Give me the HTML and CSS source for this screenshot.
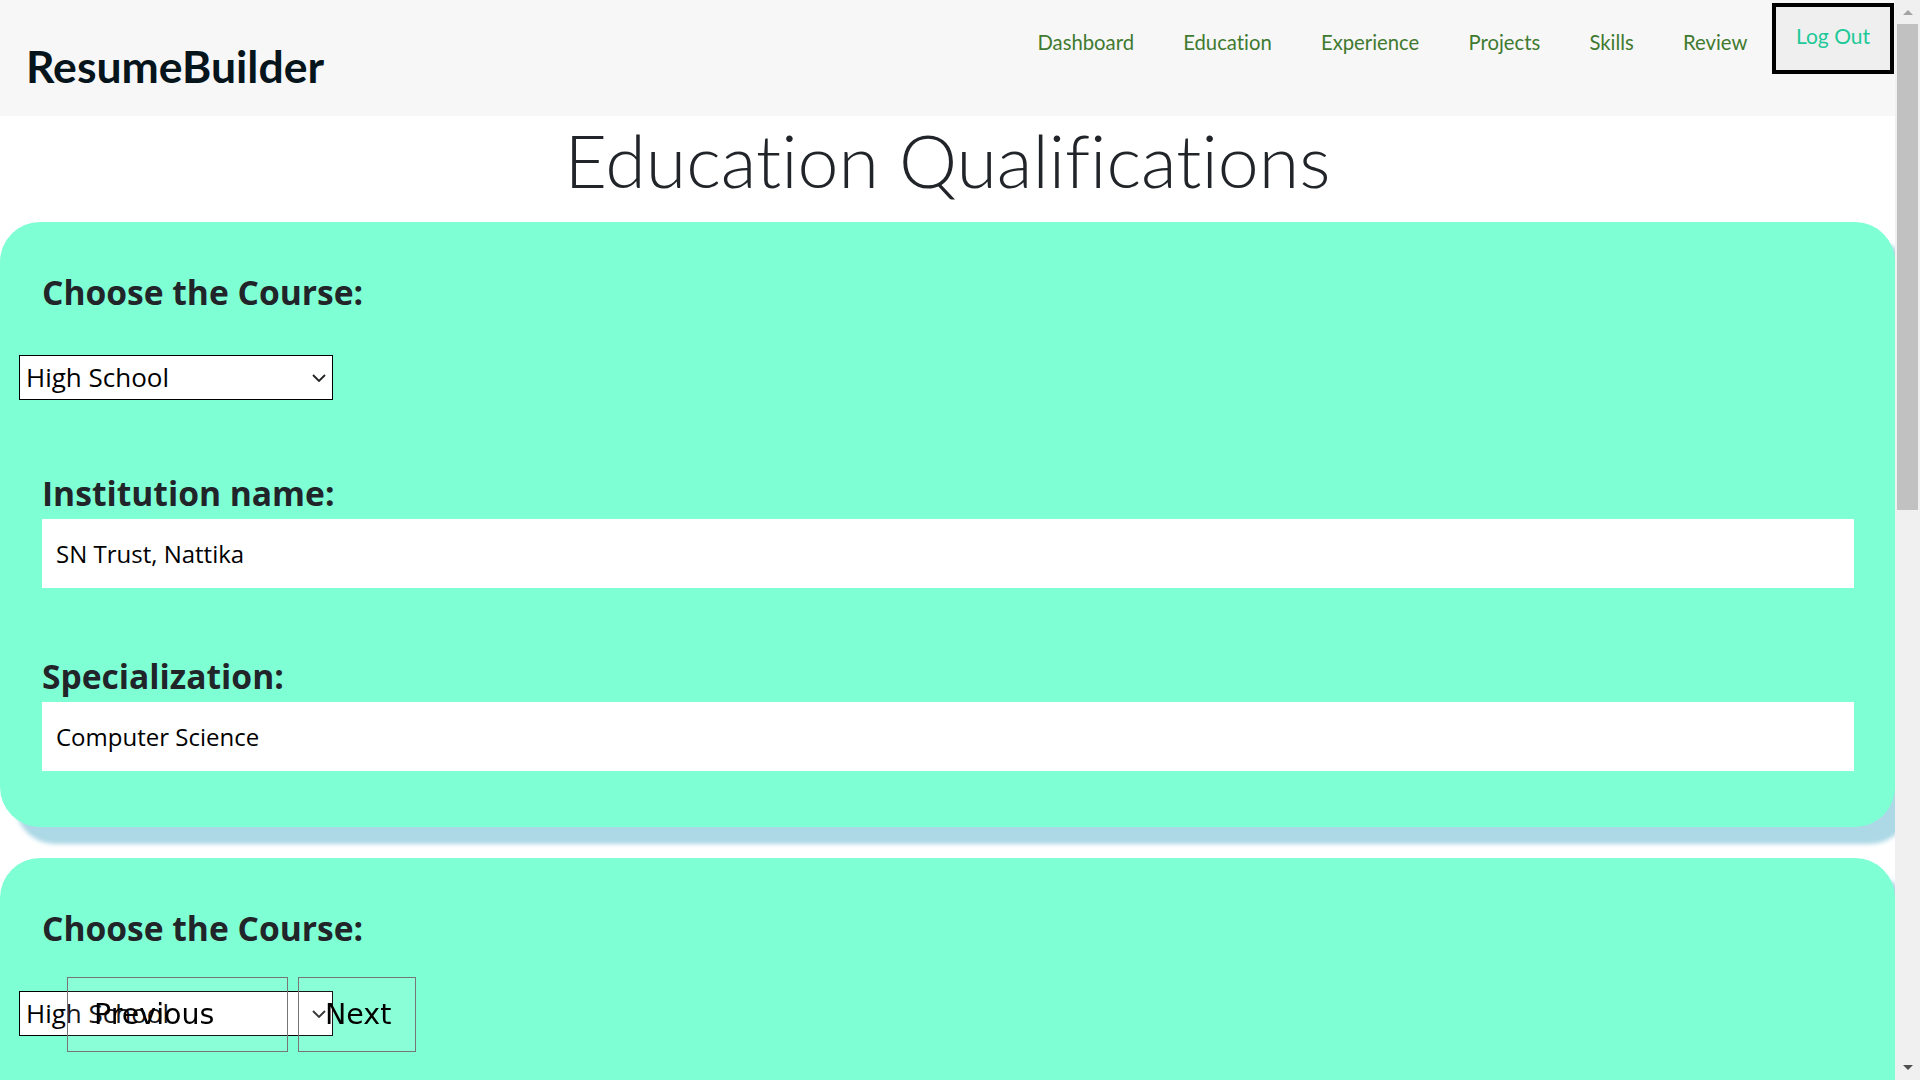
FILE: index.html
```html
<!DOCTYPE html>
<html lang="en">
<head>
<meta charset="utf-8">
<title>ResumeBuilder - Education</title>
<link rel="stylesheet" href="styles.css">
</head>
<body>
<div class="page">
  <header class="topbar">
    <div class="logo">ResumeBuilder</div>
    <nav class="nav">
      <a class="nav-link" href="#">Dashboard</a>
      <a class="nav-link" href="#">Education</a>
      <a class="nav-link" href="#">Experience</a>
      <a class="nav-link" href="#">Projects</a>
      <a class="nav-link" href="#">Skills</a>
      <a class="nav-link" href="#">Review</a>
      <button class="logout">Log Out</button>
    </nav>
  </header>

  <h1 class="title">Education Qualifications</h1>

  <section class="card">
    <h3 class="label first">Choose the Course:</h3>
    <div class="select-wrap">
      <select class="course"><option>High School</option></select>
      <svg class="chev" width="14" height="8" viewBox="0 0 14 8"><path d="M1 1 L7 7 L13 1" fill="none" stroke="#222" stroke-width="1.8"/></svg>
    </div>
    <h3 class="label">Institution name:</h3>
    <input class="field" type="text" value="SN Trust, Nattika">
    <h3 class="label">Specialization:</h3>
    <input class="field" type="text" value="Computer Science">
  </section>

  <section class="card second">
    <h3 class="label first">Choose the Course:</h3>
    <div class="select-wrap">
      <select class="course"><option>High School</option></select>
      <svg class="chev" width="14" height="8" viewBox="0 0 14 8"><path d="M1 1 L7 7 L13 1" fill="none" stroke="#222" stroke-width="1.8"/></svg>
    </div>
  </section>

  <div class="pager">
    <button class="pbtn prev">Previous</button>
    <button class="pbtn next">Next</button>
  </div>
</div>
<div class="scrollbar">
  <div class="arrow up"></div>
  <div class="thumb"></div>
  <div class="track-rest"></div>
  <div class="arrow down"></div>
</div>
</body>
</html>
```
FILE: styles.css
```css
* { box-sizing: border-box; }
html, body { margin: 0; padding: 0; }
body {
  display: flex;
  height: 100vh;
  overflow: hidden;
  background: #fff;
  font-family: "Open Sans", "Noto Sans", sans-serif;
  color: #212529;
}
.page {
  flex: 1;
  height: 100vh;
  overflow: hidden;
}
.topbar {
  display: flex;
  justify-content: space-between;
  align-items: flex-start;
  height: 116px;
  background: #f7f7f7;
  padding-left: 26px;
}
.logo {
  font-family: Lato, sans-serif;
  font-weight: 700;
  font-size: 44.5px;
  line-height: 1;
  padding-top: 44px;
  color: #06141c;
  font-variant-ligatures: none;
}
.nav {
  display: flex;
  align-items: flex-start;
  padding-right: 1px;
}
.nav-link {
  font-family: Lato, sans-serif;
  font-size: 20.3px;
  line-height: 1;
  padding: 32px 24.6px 0;
  color: #3f7a30;
  text-decoration: none;
  font-variant-ligatures: none;
}
.logout {
  margin-top: 3px;
  height: 71px;
  width: 122px;
  border: 4px solid #000;
  background: #efefef;
  padding: 0 0 6px;
  font-family: Lato, sans-serif;
  font-size: 21px;
  line-height: 57px;
  color: #20c997;
  text-align: center;
}
.title {
  margin: 7px 0 25px;
  text-align: center;
  font-family: Lato, sans-serif;
  font-weight: 300;
  font-size: 73.5px;
  line-height: 1;
  color: #212529;
  font-variant-ligatures: none;
}
.card {
  display: flex;
  flex-direction: column;
  align-items: flex-start;
  background: #7fffd4;
  border-radius: 40px;
  box-shadow: 15px 17px 4px #add8e6;
  padding: 0 41px 56px 19px;
  margin-bottom: 31px;
}
.card.second {
  min-height: 600px;
}
.label {
  margin: 68px 0 0 23px;
  font-family: "Open Sans", sans-serif;
  font-weight: 700;
  font-size: 33.6px;
  line-height: 40px;
  color: #212529;
}
.label.first { margin-top: 50px; }
.select-wrap {
  position: relative;
  margin-top: 43px;
  margin-bottom: 5px;
}
.course {
  -webkit-appearance: none;
  appearance: none;
  width: 314px;
  height: 45px;
  border: 1px solid #000;
  border-radius: 0;
  background: #fff;
  padding: 0 0 0 6px;
  font-family: "Open Sans", sans-serif;
  font-size: 26px;
  color: #000;
}
.chev {
  position: absolute;
  right: 7px;
  top: 19px;
}
.field {
  margin-top: 6px;
  margin-left: 23px;
  width: calc(100% - 23px);
  height: 69px;
  border: none;
  border-radius: 0;
  background: #fff;
  padding: 0 14px;
  font-family: "Open Sans", sans-serif;
  font-size: 24px;
  color: #000;
}
.pager {
  position: fixed;
  left: 67px;
  top: 977px;
  display: flex;
  gap: 10px;
}
.pbtn {
  height: 75px;
  border: 1px solid #767676;
  background: rgba(255, 255, 255, 0.09);
  font-family: "DejaVu Sans", sans-serif;
  font-size: 28.5px;
  color: #000;
  text-align: left;
  padding: 0 0 0 26px;
}
.prev { width: 221px; }
.next { width: 118px; }
.scrollbar {
  width: 25px;
  height: 100vh;
  background: #f0f0f0;
  display: flex;
  flex-direction: column;
  align-items: center;
}
.arrow {
  width: 0;
  height: 0;
  border-left: 5px solid transparent;
  border-right: 5px solid transparent;
}
.arrow.up {
  margin-top: 10px;
  border-bottom: 5px solid #a3a3a3;
}
.arrow.down {
  margin-bottom: 10px;
  border-top: 5px solid #505050;
}
.thumb {
  margin-top: 9px;
  width: 21px;
  height: 486px;
  background: #c1c1c1;
}
.track-rest { flex: 1; }
```
